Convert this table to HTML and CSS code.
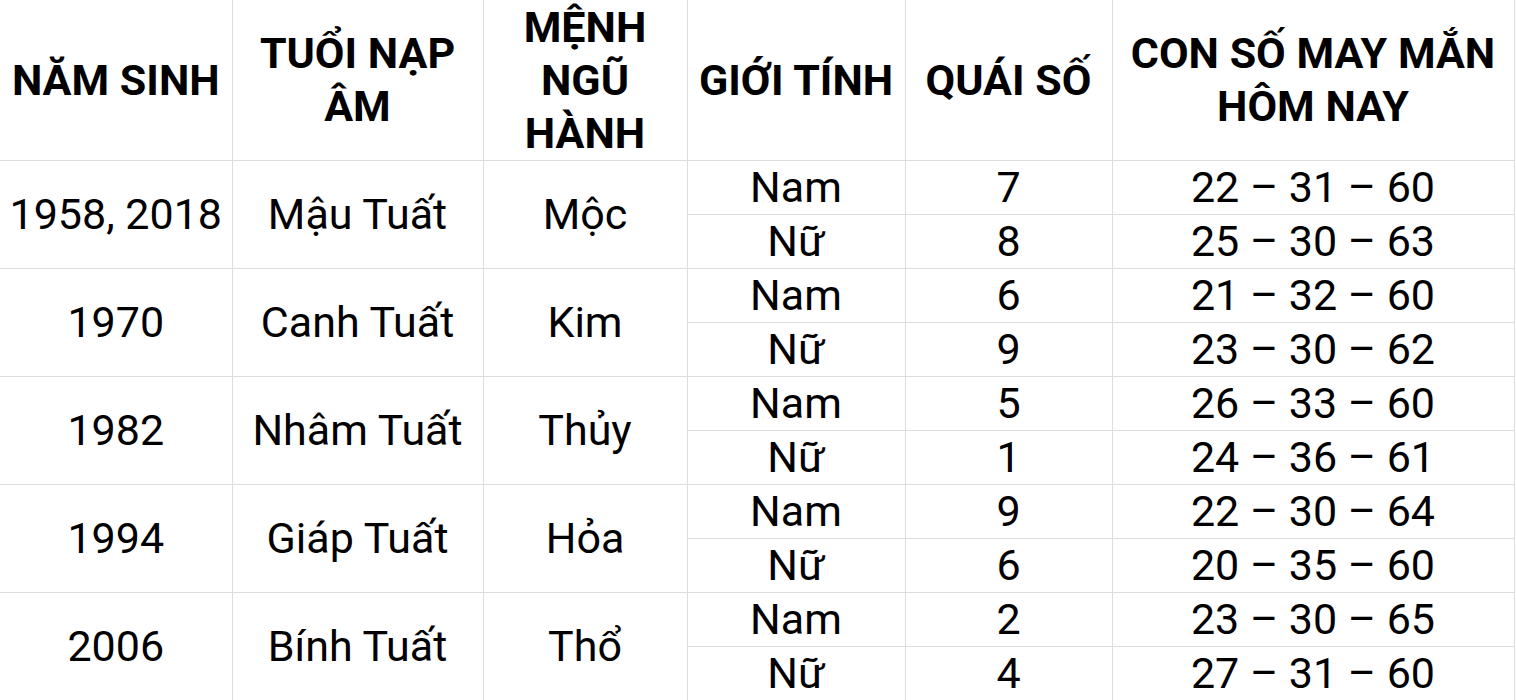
FILE: index.html
```html
<!DOCTYPE html>
<html lang="vi">
<head>
<meta charset="utf-8">
<link rel="stylesheet" href="styles.css">
</head>
<body>
<table class="luck">
  <colgroup>
    <col class="c1"><col class="c2"><col class="c3"><col class="c4"><col class="c5"><col class="c6">
  </colgroup>
  <thead>
    <tr class="head">
      <th>NĂM SINH</th>
      <th>TUỔI NẠP<br>ÂM</th>
      <th>MỆNH<br>NGŨ<br>HÀNH</th>
      <th>GIỚI TÍNH</th>
      <th>QUÁI SỐ</th>
      <th>CON SỐ MAY MẮN<br>HÔM NAY</th>
    </tr>
  </thead>
  <tbody>
    <tr><td rowspan="2">1958, 2018</td><td rowspan="2">Mậu Tuất</td><td rowspan="2">Mộc</td><td>Nam</td><td>7</td><td>22 – 31 – 60</td></tr>
    <tr><td>Nữ</td><td>8</td><td>25 – 30 – 63</td></tr>
    <tr><td rowspan="2">1970</td><td rowspan="2">Canh Tuất</td><td rowspan="2">Kim</td><td>Nam</td><td>6</td><td>21 – 32 – 60</td></tr>
    <tr><td>Nữ</td><td>9</td><td>23 – 30 – 62</td></tr>
    <tr><td rowspan="2">1982</td><td rowspan="2">Nhâm Tuất</td><td rowspan="2">Thủy</td><td>Nam</td><td>5</td><td>26 – 33 – 60</td></tr>
    <tr><td>Nữ</td><td>1</td><td>24 – 36 – 61</td></tr>
    <tr><td rowspan="2">1994</td><td rowspan="2">Giáp Tuất</td><td rowspan="2">Hỏa</td><td>Nam</td><td>9</td><td>22 – 30 – 64</td></tr>
    <tr><td>Nữ</td><td>6</td><td>20 – 35 – 60</td></tr>
    <tr><td rowspan="2">2006</td><td rowspan="2">Bính Tuất</td><td rowspan="2">Thổ</td><td>Nam</td><td>2</td><td>23 – 30 – 65</td></tr>
    <tr><td>Nữ</td><td>4</td><td>27 – 31 – 60</td></tr>
  </tbody>
</table>
</body>
</html>
```

FILE: styles.css
```css
html, body {
  margin: 0;
  padding: 0;
  background: #ffffff;
}
body {
  font-family: Roboto, "Noto Sans", "Liberation Sans", sans-serif;
  color: #000000;
  overflow: hidden;
}
.luck {
  border-collapse: collapse;
  table-layout: fixed;
  width: 1514px;
}
.c1 { width: 232px; }
.c2 { width: 251px; }
.c3 { width: 204px; }
.c4 { width: 218px; }
.c5 { width: 207px; }
.c6 { width: 402px; }
.luck th,
.luck td {
  border: 1px solid #dddddd;
  padding: 0;
  text-align: center;
  vertical-align: middle;
}
.luck th {
  font-weight: 700;
  font-size: 43px;
  line-height: 53px;
  height: 160px;
  border-top: none;
}
.luck td {
  font-weight: 400;
  font-size: 43px;
  line-height: 53px;
  height: 53px;
}
.luck tr > :first-child {
  border-left: none;
}
```
